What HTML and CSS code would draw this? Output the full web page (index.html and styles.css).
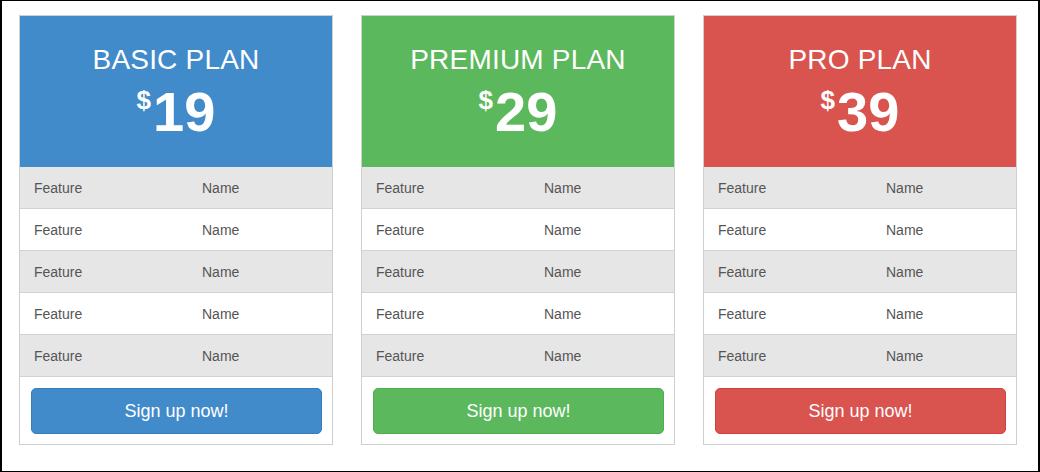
FILE: index.html
```html
<!DOCTYPE html>
<html>
<head>
<meta charset="utf-8">
<link rel="stylesheet" href="styles.css">
</head>
<body>
<div class="frame">
  <div class="plan plan-blue">
    <div class="plan-head">
      <div class="plan-title">BASIC PLAN</div>
      <div class="plan-price"><span class="cur">$</span><span class="amt">19</span></div>
    </div>
    <div class="row alt"><span>Feature</span><span>Name</span></div>
    <div class="row"><span>Feature</span><span>Name</span></div>
    <div class="row alt"><span>Feature</span><span>Name</span></div>
    <div class="row"><span>Feature</span><span>Name</span></div>
    <div class="row alt"><span>Feature</span><span>Name</span></div>
    <div class="plan-foot"><a class="btn">Sign up now!</a></div>
  </div>
  <div class="plan plan-green">
    <div class="plan-head">
      <div class="plan-title">PREMIUM PLAN</div>
      <div class="plan-price"><span class="cur">$</span><span class="amt">29</span></div>
    </div>
    <div class="row alt"><span>Feature</span><span>Name</span></div>
    <div class="row"><span>Feature</span><span>Name</span></div>
    <div class="row alt"><span>Feature</span><span>Name</span></div>
    <div class="row"><span>Feature</span><span>Name</span></div>
    <div class="row alt"><span>Feature</span><span>Name</span></div>
    <div class="plan-foot"><a class="btn">Sign up now!</a></div>
  </div>
  <div class="plan plan-red">
    <div class="plan-head">
      <div class="plan-title">PRO PLAN</div>
      <div class="plan-price"><span class="cur">$</span><span class="amt">39</span></div>
    </div>
    <div class="row alt"><span>Feature</span><span>Name</span></div>
    <div class="row"><span>Feature</span><span>Name</span></div>
    <div class="row alt"><span>Feature</span><span>Name</span></div>
    <div class="row"><span>Feature</span><span>Name</span></div>
    <div class="row alt"><span>Feature</span><span>Name</span></div>
    <div class="plan-foot"><a class="btn">Sign up now!</a></div>
  </div>
</div>
</body>
</html>
```
FILE: styles.css
```css
* { box-sizing: border-box; }
html, body { margin: 0; padding: 0; background: #fff; }
body { font-family: "Liberation Sans", Arial, sans-serif; }

.frame {
  width: 1040px;
  height: 472px;
  border-style: solid;
  border-color: #000;
  border-width: 1px 2px;
  padding: 14px 0 0 17px;
  display: flex;
  align-items: flex-start;
  gap: 28px;
}

.plan {
  width: 314px;
  border: 1px solid #cfcfcf;
  background: #fff;
  display: flex;
  flex-direction: column;
}

.plan-head {
  height: 151px;
  color: #fff;
  display: flex;
  flex-direction: column;
  align-items: center;
  padding-top: 28px;
}
.plan-blue .plan-head { background: #428bca; }
.plan-green .plan-head { background: #5cb85c; }
.plan-red .plan-head { background: #d9534f; }

.plan-title {
  font-size: 28px;
  line-height: 32px;
  letter-spacing: 0.2px;
}

.plan-price {
  display: flex;
  align-items: flex-start;
  margin-top: 8px;
  font-weight: bold;
}
.plan-price .cur {
  font-size: 26px;
  line-height: 26px;
  margin-top: 3px;
  margin-right: 2px;
}
.plan-price .amt {
  font-size: 56px;
  line-height: 56px;
}

.row {
  height: 42px;
  border-bottom: 1px solid #d2d2d2;
  display: grid;
  grid-template-columns: 168px 1fr;
  align-items: center;
  padding-left: 14px;
  font-size: 14px;
  color: #555;
  background: #fff;
}
.row.alt { background: #e6e6e6; }

.plan-foot {
  padding: 11px 10px 10px 11px;
}
.btn {
  display: flex;
  align-items: center;
  justify-content: center;
  height: 46px;
  border-radius: 5px;
  font-size: 18px;
  color: #fff;
  border: 1px solid transparent;
}
.plan-blue .btn { background: #428bca; border-color: #357ebd; }
.plan-green .btn { background: #5cb85c; border-color: #4cae4c; }
.plan-red .btn { background: #d9534f; border-color: #d43f3a; }
```
